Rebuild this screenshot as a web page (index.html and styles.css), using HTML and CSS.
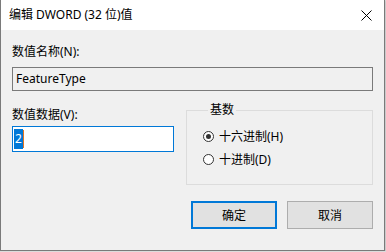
FILE: index.html
```html
<!DOCTYPE html>
<html lang="zh-CN">
<head>
  <meta charset="UTF-8">
  <title>编辑 DWORD (32 位)值</title>
  <link rel="stylesheet" href="styles.css">
</head>
<body>
  <div class="window">
    <div class="titlebar">
      <span class="title">编辑 DWORD (32 位)值</span>
      <svg class="close" width="11" height="11" viewBox="0 0 11 11">
        <path d="M0.5 0.5 L10.5 10.5 M10.5 0.5 L0.5 10.5" stroke="#000" stroke-width="1" fill="none"/>
      </svg>
    </div>

    <div class="content">
      <div class="label">数值名称(N):</div>
      <div class="field readonly">FeatureType</div>

      <div class="row">
        <div class="data-col">
          <div class="label">数值数据(V):</div>
          <div class="field active"><span class="sel">2</span><span class="caret"></span></div>
        </div>

        <fieldset class="group">
          <legend>基数</legend>
          <div class="radio">
            <span class="dot checked"></span>
            <span>十六进制(H)</span>
          </div>
          <div class="radio">
            <span class="dot"></span>
            <span>十进制(D)</span>
          </div>
        </fieldset>
      </div>

      <div class="buttons">
        <div class="btn default">确定</div>
        <div class="btn">取消</div>
      </div>
    </div>
  </div>
</body>
</html>
```

FILE: styles.css
```css
body {
  margin: 0;
  background: #dcdcdc;
  font-family: "Noto Sans", "Noto Sans CJK SC", sans-serif;
  font-size: 12px;
  color: #000;
}

.window {
  width: 383px;
  height: 250px;
  background: #f0f0f0;
  border: 1px solid #7a7a7a;
  border-top: none;
  box-shadow: 0 1px 2px rgba(0,0,0,0.25);
  display: flex;
  flex-direction: column;
}

.titlebar {
  height: 30px;
  background: #fff;
  display: flex;
  align-items: center;
  justify-content: space-between;
  padding: 0 12px 0 8px;
}

.title {
  font-size: 12px;
  line-height: 16px;
}

.content {
  padding: 13px 11px 0 11px;
  display: flex;
  flex-direction: column;
}

.label {
  line-height: 17px;
}

.field {
  height: 24px;
  border: 1px solid #7a7a7a;
  box-sizing: border-box;
  line-height: 22px;
  padding: 0 3px;
}

.content > .field {
  width: 361px;
  margin-top: 7px;
}

.readonly {
  background: #f0f0f0;
}

.row {
  display: flex;
  margin-top: 15px;
  gap: 12px;
  align-items: flex-start;
}

.data-col {
  display: flex;
  flex-direction: column;
}

.data-col .field {
  width: 162px;
  height: 26px;
  margin-top: 3px;
  background: #fff;
  border-color: #0078d7;
  display: flex;
  align-items: center;
  padding: 0 1px;
}

.sel {
  background: #0078d7;
  color: #fff;
  line-height: 20px;
  padding: 0 1px;
}

.caret {
  width: 1px;
  height: 18px;
  background: #e5751f;
}

.group {
  margin: -3px 0 0 0;
  padding: 11px 0 10px 16px;
  width: 188px;
  height: 82px;
  box-sizing: border-box;
  border: 1px solid #dcdcdc;
  display: flex;
  flex-direction: column;
  gap: 6px;
}

.group legend {
  padding: 0 2px;
  margin-left: 5px;
  line-height: 14px;
}

.radio {
  display: flex;
  align-items: center;
  gap: 5px;
  line-height: 17px;
}

.dot {
  width: 11px;
  height: 11px;
  border: 1px solid #333;
  border-radius: 50%;
  background: #fff;
  box-sizing: border-box;
  display: flex;
  align-items: center;
  justify-content: center;
}

.dot.checked::after {
  content: "";
  width: 5px;
  height: 5px;
  border-radius: 50%;
  background: #333;
}

.buttons {
  display: flex;
  justify-content: flex-end;
  gap: 10px;
  margin-top: 16px;
}

.btn {
  width: 86px;
  height: 28px;
  box-sizing: border-box;
  border: 1px solid #adadad;
  background: #e1e1e1;
  display: flex;
  align-items: center;
  justify-content: center;
}

.btn.default {
  border: 2px solid #0078d7;
}
```
